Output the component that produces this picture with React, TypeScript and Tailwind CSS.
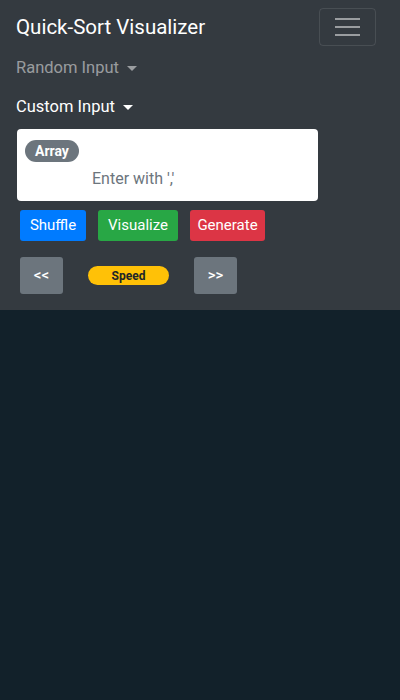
import React from 'react';

const Caret: React.FC<{ className?: string }> = ({ className }) => (
  <span
    className={
      "ml-2 inline-block w-0 h-0 border-l-[5px] border-r-[5px] border-t-[5px] border-l-transparent border-r-transparent align-middle " +
      (className ?? "")
    }
  />
);

const App: React.FC = () => {
  return (
    <div className="min-h-[700px] bg-[#12212a]" style={{ fontFamily: 'Roboto, "Liberation Sans", sans-serif' }}>
      <nav className="bg-[#343a40] px-4 pt-2 pb-4 h-[310px]">
        <div className="flex items-center justify-between">
          <span className="text-[20.5px] text-white leading-[38px]">Quick-Sort Visualizer</span>
          <button className="mr-2 w-[57px] h-[38px] border border-white/10 rounded flex flex-col items-center justify-center gap-[6px]">
            <span className="block w-[25px] h-[2px] bg-white/50" />
            <span className="block w-[25px] h-[2px] bg-white/50" />
            <span className="block w-[25px] h-[2px] bg-white/50" />
          </button>
        </div>

        <div className="mt-[2px] flex flex-col">
          <div className="py-2 leading-6 text-[16.5px] text-white/50 flex items-center">
            Random Input
            <Caret className="border-t-white/50" />
          </div>
          <div className="py-2 mt-[-1px] leading-6 text-[16.5px] text-white flex items-center">
            Custom Input
            <Caret className="border-t-white" />
          </div>
        </div>

        <div className="mt-[2px] ml-[1px] w-[301px] h-[72px] bg-white rounded pt-[10px] px-2">
          <span className="inline-block bg-[#6c757d] text-white font-bold text-[14px] leading-[22px] px-[10px] rounded-full">
            Array
          </span>
          <div className="pl-[67px] mt-[4px] text-[16px] leading-6 text-[#6c757d]">Enter with ','</div>
        </div>

        <div className="mt-[9px] ml-[4px] flex gap-3">
          <button className="h-[31px] w-[66px] bg-[#007bff] text-white text-[15px] rounded-[3px]">Shuffle</button>
          <button className="h-[31px] w-[80px] bg-[#28a745] text-white text-[15px] rounded-[3px]">Visualize</button>
          <button className="h-[31px] w-[75px] bg-[#dc3545] text-white text-[15px] rounded-[3px]">Generate</button>
        </div>

        <div className="mt-4 ml-[4px] flex items-center">
          <button className="h-[37px] w-[43px] bg-[#6c757d] text-white text-[15px] font-medium rounded-[3px]">&lt;&lt;</button>
          <span className="ml-[25px] w-[81px] h-[19px] bg-[#ffc107] text-[#212529] text-[12px] font-bold rounded-full flex items-center justify-center">
            Speed
          </span>
          <button className="ml-[25px] h-[37px] w-[43px] bg-[#6c757d] text-white text-[15px] font-medium rounded-[3px]">&gt;&gt;</button>
        </div>
      </nav>
    </div>
  );
};

export default App;
